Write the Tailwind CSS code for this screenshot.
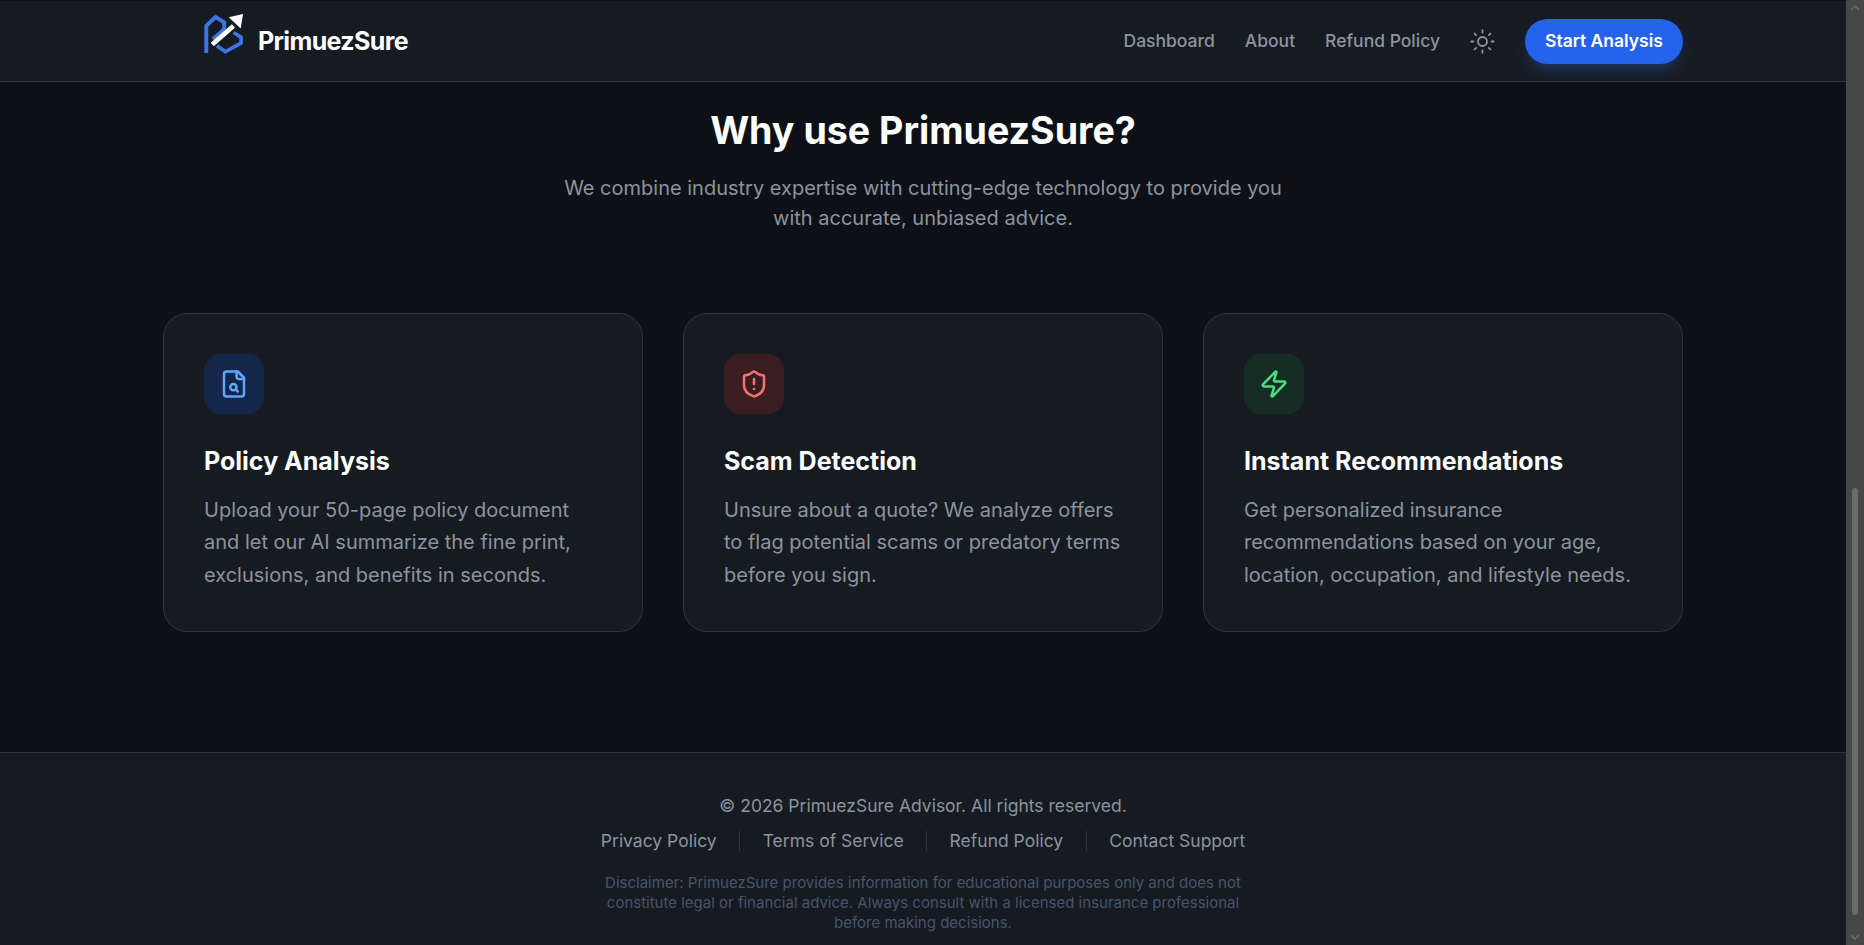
<!DOCTYPE html>
<html lang="en">
<head>
  <meta charset="UTF-8">
  <title>PrimuezSure</title>
  <script src="https://cdn.jsdelivr.net/npm/@tailwindcss/browser@4"></script>
</head>
<body class="bg-[#0d1117] font-['Inter',sans-serif] h-screen overflow-hidden flex">
  <div class="flex-1 min-w-0 h-screen overflow-hidden flex flex-col">
    <!-- navbar -->
    <header class="shrink-0 h-[82px] border-t border-t-[#0d1117] border-b border-b-[#30363d] bg-[#161b22]">
      <div class="w-[1520px] h-full mx-auto pl-10 flex items-center justify-between">
        <div class="flex items-center gap-[14px] pt-[1px]">
          <svg class="w-[42px] h-[43px] mb-[14px] -ml-[1px]" viewBox="20 25 125 130" fill="none">
            <path d="M32 146V64L60 37L86 53V74L52 104" stroke="#3f73e8" stroke-width="12" />
            <path d="M114 84L137 98V116L90 142L64 124" stroke="#3f73e8" stroke-width="11" />
            <path d="M50 120L114 64" stroke="#fff" stroke-width="14" />
            <path d="M143 28L100 38L136 72Z" fill="#fff" />
          </svg>
          <span class="text-[25px] font-bold text-white tracking-tight">PrimuezSure</span>
        </div>
        <nav class="flex items-center gap-[30px] pt-[1px]">
          <a class="text-[17.5px] font-medium text-[#8b949e]">Dashboard</a>
          <a class="text-[17.5px] font-medium text-[#8b949e]">About</a>
          <a class="text-[17.5px] font-medium text-[#8b949e]">Refund Policy</a>
          <svg class="w-[27px] h-[27px] -ml-[1px] text-[#8b949e]" viewBox="0 0 24 24" fill="none" stroke="currentColor" stroke-width="1.6" stroke-linecap="round" stroke-linejoin="round">
            <circle cx="12" cy="12" r="4" />
            <path d="M12 2v2M12 20v2M4.93 4.93l1.41 1.41M17.66 17.66l1.41 1.41M2 12h2M20 12h2M6.34 17.66l-1.41 1.41M19.07 4.93l-1.41 1.41" />
          </svg>
          <button class="h-[45px] w-[158px] -ml-[1px] rounded-full bg-[#2563eb] text-white text-[17.5px] font-semibold shadow-lg shadow-blue-500/20">Start Analysis</button>
        </nav>
      </div>
    </header>

    <main class="shrink-0 pt-[29px] pb-[120px]">
      <div class="text-center">
        <h2 class="text-[37.6px] leading-10 font-bold text-white mb-[22px]">Why use PrimuezSure?</h2>
        <p class="text-xl leading-[30px] text-[#8b949e] max-w-[720px] mx-auto">We combine industry expertise with cutting-edge technology to provide you with accurate, unbiased advice.</p>
      </div>

      <div class="w-[1520px] mx-auto mt-20 grid grid-cols-3 gap-10">
        <div class="bg-[#161b22] border border-[#30363d] rounded-3xl p-10">
          <div class="w-[60px] h-[60px] rounded-2xl bg-[#14274a] flex items-center justify-center mb-8">
            <svg class="w-[30px] h-[30px] text-[#60a5fa]" viewBox="0 0 24 24" fill="none" stroke="currentColor" stroke-width="2" stroke-linecap="round" stroke-linejoin="round">
              <path d="M15 2H6a2 2 0 0 0-2 2v16a2 2 0 0 0 2 2h12a2 2 0 0 0 2-2V7Z" />
              <path d="M14 2v4a2 2 0 0 0 2 2h4" />
              <circle cx="11.5" cy="14.5" r="2.5" />
              <path d="M13.3 16.3 15 18" />
            </svg>
          </div>
          <h3 class="text-[25px] leading-[31.5px] font-bold text-white mb-4">Policy Analysis</h3>
          <p class="text-xl leading-relaxed text-[#8b949e]">Upload your 50-page policy document and let our AI summarize the fine print, exclusions, and benefits in seconds.</p>
        </div>

        <div class="bg-[#161b22] border border-[#30363d] rounded-3xl p-10">
          <div class="w-[60px] h-[60px] rounded-2xl bg-[#3a1d20] flex items-center justify-center mb-8">
            <svg class="w-[30px] h-[30px] text-[#f87171]" viewBox="0 0 24 24" fill="none" stroke="currentColor" stroke-width="2" stroke-linecap="round" stroke-linejoin="round">
              <path d="M20 13c0 5-3.5 7.5-7.66 8.95a1 1 0 0 1-.67-.01C7.5 20.5 4 18 4 13V6a1 1 0 0 1 1-1c2 0 4.5-1.2 6.24-2.72a1.17 1.17 0 0 1 1.52 0C14.51 3.81 17 5 19 5a1 1 0 0 1 1 1z" />
              <path d="M12 8v4" />
              <path d="M12 16h.01" />
            </svg>
          </div>
          <h3 class="text-[25px] leading-[31.5px] font-bold text-white mb-4">Scam Detection</h3>
          <p class="text-xl leading-relaxed text-[#8b949e]">Unsure about a quote? We analyze offers to flag potential scams or predatory terms before you sign.</p>
        </div>

        <div class="bg-[#161b22] border border-[#30363d] rounded-3xl p-10">
          <div class="w-[60px] h-[60px] rounded-2xl bg-[#162d25] flex items-center justify-center mb-8">
            <svg class="w-[30px] h-[30px] text-[#4ade80]" viewBox="0 0 24 24" fill="none" stroke="currentColor" stroke-width="2" stroke-linecap="round" stroke-linejoin="round">
              <path d="M4 14a1 1 0 0 1-.78-1.63l9.9-10.2a.5.5 0 0 1 .86.46l-1.92 6.02A1 1 0 0 0 13 10h7a1 1 0 0 1 .78 1.63l-9.9 10.2a.5.5 0 0 1-.86-.46l1.92-6.02A1 1 0 0 0 11 14z" />
            </svg>
          </div>
          <h3 class="text-[25px] leading-[31.5px] font-bold text-white mb-4">Instant Recommendations</h3>
          <p class="text-xl leading-relaxed text-[#8b949e]">Get personalized insurance recommendations based on your age, location, occupation, and lifestyle needs.</p>
        </div>
      </div>
    </main>

    <footer class="shrink-0 border-t border-[#30363d] bg-[#161b22] pt-[39px] pb-10 text-center">
      <p class="text-[17.5px] leading-7 text-[#8b949e]">© 2026 PrimuezSure Advisor. All rights reserved.</p>
      <div class="mt-[7px] flex items-center justify-center gap-[22.5px] text-[17.5px] leading-7 text-[#8b949e]">
        <a>Privacy Policy</a>
        <span class="w-px h-5 bg-[#30363d]"></span>
        <a>Terms of Service</a>
        <span class="w-px h-5 bg-[#30363d]"></span>
        <a>Refund Policy</a>
        <span class="w-px h-5 bg-[#30363d]"></span>
        <a>Contact Support</a>
      </div>
      <p class="mt-[18px] text-[15px] leading-5 text-[#475569] max-w-2xl mx-auto">Disclaimer: PrimuezSure provides information for educational purposes only and does not constitute legal or financial advice. Always consult with a licensed insurance professional before making decisions.</p>
    </footer>
  </div>

  <!-- scrollbar -->
  <div class="relative w-[18px] h-screen shrink-0 bg-[#474747]">
    <svg class="absolute top-[3px] left-[4px] w-[10px] h-[10px] text-[#6b6b6b]" viewBox="0 0 10 10" fill="none" stroke="currentColor" stroke-width="1.5"><path d="M1 7l4-4 4 4" /></svg>
    <div class="absolute left-[6px] top-[488px] w-[6px] h-[427px] rounded-full bg-[#6a6a6a]"></div>
    <svg class="absolute bottom-[3px] left-[4px] w-[10px] h-[10px] text-[#6b6b6b]" viewBox="0 0 10 10" fill="none" stroke="currentColor" stroke-width="1.5"><path d="M1 3l4 4 4-4" /></svg>
  </div>
</body>
</html>
